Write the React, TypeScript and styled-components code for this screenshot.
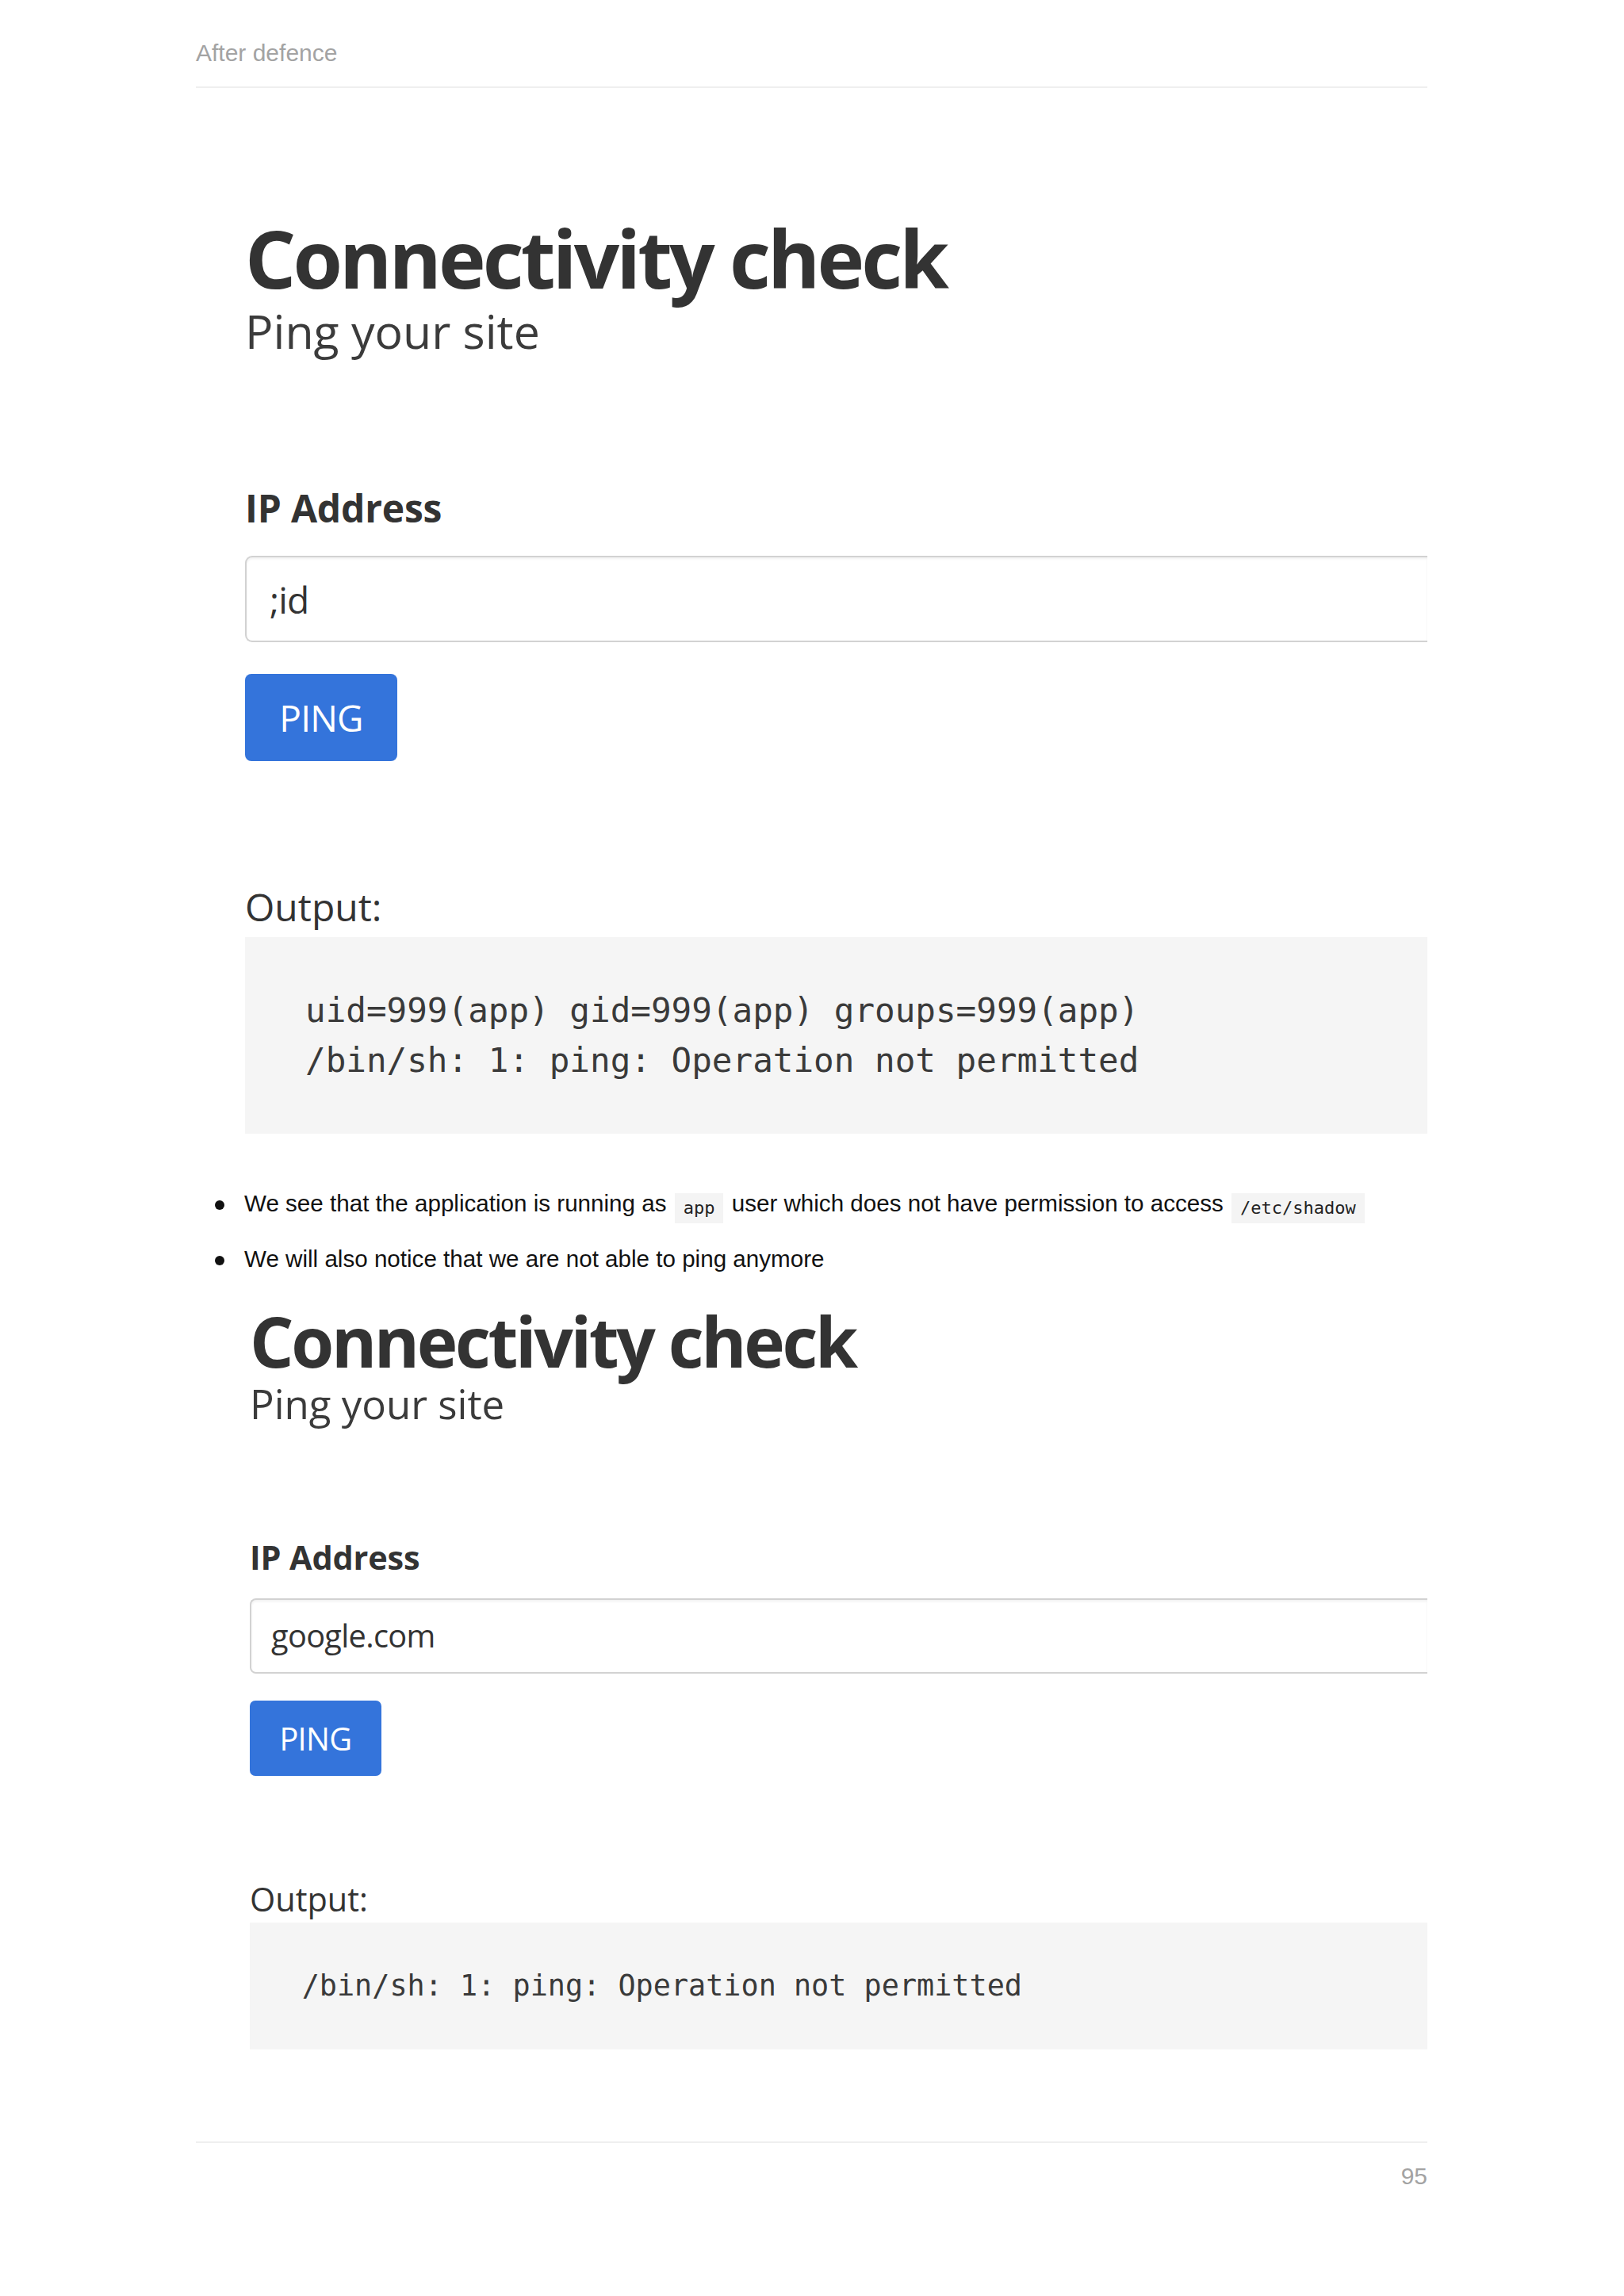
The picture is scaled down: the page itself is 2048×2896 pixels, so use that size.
import React from 'react'
import styled, { createGlobalStyle } from 'styled-components'

const GlobalStyle = createGlobalStyle`
    html, body {
        margin: 0;
        padding: 0;
        background: #ffffff;
    }
`

const Page = styled.div`
    width: 2048px;
    height: 2896px;
    box-sizing: border-box;
    padding: 0 248px 0 247px;
    display: flex;
    flex-direction: column;
    font-family: "Liberation Sans", Arial, sans-serif;
    color: #111;
    overflow: hidden;
`

const RunningHead = styled.div`
    padding-top: 50px;
    padding-bottom: 25px;
    border-bottom: 2px solid #efefef;
    font-size: 30px;
    line-height: 34px;
    color: #a3a3a3;
`

// one screenshot of the ping page; `k` scales everything in it
const Shot = styled.div<{ $k: number; $left: number; $top: number }>`
    margin-left: ${p => p.$left}px;
    margin-top: ${p => p.$top}px;
    display: flex;
    flex-direction: column;
    align-items: flex-start;
    font-family: "Open Sans", "Noto Sans", sans-serif;
    color: #333;
    --k: ${p => p.$k};
`

const Title = styled.h1`
    margin: 0;
    font-size: calc(101px * var(--k));
    line-height: calc(110px * var(--k));
    font-weight: 700;
    letter-spacing: calc(-3.9px * var(--k));
    color: #333;
`

const Subtitle = styled.div`
    margin-top: calc(5px * var(--k));
    font-size: calc(59px * var(--k));
    line-height: calc(64px * var(--k));
    font-weight: 400;
    color: #3b3b3b;
`

const Label = styled.label`
    margin-top: calc(166px * var(--k));
    font-size: calc(48px * var(--k));
    line-height: calc(52px * var(--k));
    font-weight: 700;
    letter-spacing: calc(-0.2px * var(--k));
    color: #333;
`

// the screenshot is cropped on the right, so the field has no right edge
const Field = styled.div`
    margin-top: calc(34px * var(--k));
    align-self: stretch;
    height: calc(109px * var(--k));
    box-sizing: border-box;
    display: flex;
    align-items: center;
    padding-left: calc(29px * var(--k));
    border: 2px solid #d2d2d2;
    border-right: none;
    border-radius: calc(9px * var(--k)) 0 0 calc(9px * var(--k));
    box-shadow: inset 0 2px 3px rgba(0, 0, 0, 0.06);
    background: #fff;
    font-size: calc(46px * var(--k));
    letter-spacing: calc(-0.8px * var(--k));
    color: #333;
`

const PingButton = styled.button`
    margin-top: calc(40px * var(--k));
    width: calc(192px * var(--k));
    height: calc(110px * var(--k));
    padding: 0;
    border: none;
    border-radius: calc(8px * var(--k));
    background: #3474db;
    color: #fff;
    font-family: inherit;
    font-size: calc(46px * var(--k));
    letter-spacing: calc(-0.8px * var(--k));
    font-weight: 400;
`

const OutputLabel = styled.div<{ $gap: number }>`
    margin-top: ${p => p.$gap}px;
    font-size: calc(48px * var(--k));
    line-height: calc(52px * var(--k));
    color: #333;
`

const Output = styled.pre<{ $gap: number; $padY: number }>`
    margin: ${p => p.$gap}px 0 0;
    align-self: stretch;
    padding: ${p => p.$padY}px 0 ${p => p.$padY}px calc(76px * var(--k));
    background: #f5f5f5;
    font-family: "DejaVu Sans Mono", monospace;
    font-size: calc(42.6px * var(--k));
    line-height: calc(63px * var(--k));
    color: #3a3a3a;
`

const Bullets = styled.ul`
    margin: 68px 0 0;
    padding: 0;
    list-style: none;
    display: flex;
    flex-direction: column;
    gap: 25px;
`

const Bullet = styled.li`
    position: relative;
    padding-left: 61px;
    font-size: 29.6px;
    line-height: 40px;
    color: #111;

    &::before {
        content: '';
        position: absolute;
        left: 24px;
        top: 16px;
        width: 12px;
        height: 12px;
        border-radius: 50%;
        background: #111;
    }
`

const Code = styled.code`
    display: inline-block;
    margin: 0 2px;
    padding: 0 11px;
    line-height: 38px;
    background: #f4f4f4;
    font-family: "DejaVu Sans Mono", monospace;
    font-size: 22px;
    vertical-align: -3px;
    color: #222;
`

const Footer = styled.div`
    margin-top: auto;
    margin-bottom: 134px;
    border-top: 2px solid #efefef;
    padding-top: 25px;
    text-align: right;
    font-size: 30px;
    line-height: 34px;
    color: #a3a3a3;
`

type ShotProps = {
    k: number
    left: number
    top: number
    value: string
    output: string[]
    outGap: number
    preGap: number
    padY: number
}

const PingShot = ({ k, left, top, value, output, outGap, preGap, padY }: ShotProps) => (
    <Shot $k={k} $left={left} $top={top}>
        <Title>Connectivity check</Title>
        <Subtitle>Ping your site</Subtitle>
        <Label>IP Address</Label>
        <Field>{value}</Field>
        <PingButton>PING</PingButton>
        <OutputLabel $gap={outGap}>Output:</OutputLabel>
        <Output $gap={preGap} $padY={padY}>{output.join('\n')}</Output>
    </Shot>
)

export default function App() {
    return (
        <>
            <GlobalStyle />
            <Page>
                <RunningHead>After defence</RunningHead>
                <PingShot
                    k={1}
                    left={62}
                    top={159}
                    value=";id"
                    outGap={158}
                    preGap={12}
                    padY={61}
                    output={[
                        'uid=999(app) gid=999(app) groups=999(app)',
                        '/bin/sh: 1: ping: Operation not permitted',
                    ]}
                />
                <Bullets>
                    <Bullet>
                        We see that the application is running as <Code>app</Code> user which does not
                        have permission to access <Code>/etc/shadow</Code>
                    </Bullet>
                    <Bullet>We will also notice that we are not able to ping anymore</Bullet>
                </Bullets>
                <PingShot
                    k={0.864}
                    left={68}
                    top={36}
                    value="google.com"
                    outGap={133}
                    preGap={7}
                    padY={53}
                    output={['/bin/sh: 1: ping: Operation not permitted']}
                />
                <Footer>95</Footer>
            </Page>
        </>
    )
}
